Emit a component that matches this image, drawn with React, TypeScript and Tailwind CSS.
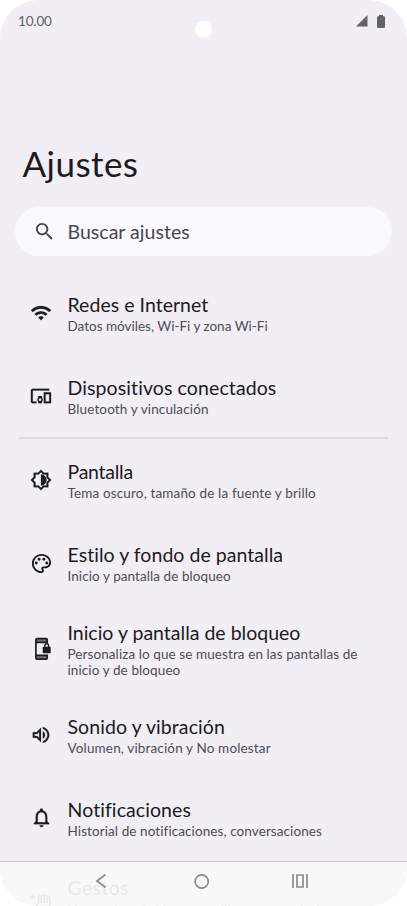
import type { ReactNode } from 'react';
import {
  MdDevicesOther,
  MdNotificationsNone,
  MdOutlineBrightnessMedium,
  MdOutlinePalette,
  MdOutlineVolumeUp,
  MdSearch,
  MdWifi,
} from 'react-icons/md';

const bold = '[&>path:last-child]:[stroke-width:0.2px]';

function PhoneLockIcon() {
  return (
    <svg width="22" height="24" viewBox="0 0 22 24" fill="none">
      <path d="M17.2 6.2V2.8c0-.7-.4-1.100-1.100-1.100H7c-.7 0-1.100.4-1.100 1.100v18.200c0 .7.4 1.100 1.100 1.100h9.100c.7 0 1.100-.4 1.100-1.100v-3.400M6 5.300h11.200M6 18.300h11.200" stroke="currentColor" strokeWidth="1.700" />
      <path d="M6 2h11v3H6zM6 19h11v3H6z" fill="currentColor" opacity=".6" />
      <rect x="12.700" y="9.800" width="8" height="6.400" rx=".8" fill="currentColor" />
      <path d="M14.800 10V8.700a1.900 1.900 0 0 1 3.800 0V10" stroke="currentColor" strokeWidth="1.400" />
    </svg>
  );
}

function GestureIcon() {
  return (
    <svg width="24" height="24" viewBox="0 0 24 24" fill="none" stroke="currentColor">
      <path d="m4 2 .9 2.100L7 5l-2.100.9L4 8l-.9-2.100L1 5l2.100-.9z" fill="currentColor" stroke="none" />
      <path strokeWidth="1.500" d="M9.500 12V5.500q0-1.500 1.400-1.500t1.400 1.500V11m0-6q0-2 1.500-2t1.500 2v6m0-6q0-1.800 1.500-1.800T18.300 5v6m0-5q0-1.300 1.200-1.300T20.700 6v10q0 6-5.700 6-4 0-6-5l-1-4" />
    </svg>
  );
}

type Item = {
  icon: ReactNode;
  title: string;
  titleClass: string;
  lines: { text: string; className: string }[];
  rowClass?: string;
};

const items: Item[] = [
  {
    icon: <MdWifi size={22} className={bold} />,
    title: 'Redes e Internet',
    titleClass: 'tracking-[0.03px]',
    lines: [{ text: 'Datos móviles, Wi-Fi y zona Wi-Fi', className: 'tracking-[0px]' }],
  },
  {
    icon: <MdDevicesOther size={22} className={bold} />,
    title: 'Dispositivos conectados',
    titleClass: 'tracking-[0.1px]',
    lines: [{ text: 'Bluetooth y vinculación', className: 'tracking-[0.13px]' }],
  },
  {
    icon: <MdOutlineBrightnessMedium size={22} className={bold} />,
    title: 'Pantalla',
    titleClass: 'tracking-[-0.25px]',
    lines: [{ text: 'Tema oscuro, tamaño de la fuente y brillo', className: 'tracking-[0.15px]' }],
    rowClass: 'h-[84px]',
  },
  {
    icon: <MdOutlinePalette size={23} />,
    title: 'Estilo y fondo de pantalla',
    titleClass: 'tracking-[0.04px]',
    lines: [{ text: 'Inicio y pantalla de bloqueo', className: 'tracking-[0.07px]' }],
    rowClass: 'h-[82px]',
  },
  {
    icon: <PhoneLockIcon />,
    title: 'Inicio y pantalla de bloqueo',
    titleClass: 'tracking-[0px]',
    lines: [
      { text: 'Personaliza lo que se muestra en las pantallas de', className: 'tracking-[0.09px]' },
      { text: 'inicio y de bloqueo', className: 'tracking-[0.1px]' },
    ],
    rowClass: 'h-[89px]',
  },
  {
    icon: <MdOutlineVolumeUp size={22} className={bold} />,
    title: 'Sonido y vibración',
    titleClass: 'tracking-[0.08px]',
    lines: [{ text: 'Volumen, vibración y No molestar', className: 'tracking-[0.15px]' }],
  },
  {
    icon: <MdNotificationsNone size={23} className={bold} />,
    title: 'Notificaciones',
    titleClass: 'tracking-[0.08px]',
    lines: [{ text: 'Historial de notificaciones, conversaciones', className: 'tracking-[0.09px]' }],
  },
  {
    icon: <GestureIcon />,
    title: 'Gestos',
    titleClass: 'tracking-[0.35px]',
    lines: [
      { text: 'Usa gestos rápidos y sencillos para controlar', className: 'tracking-[0.1px]' },
      { text: '', className: '' },
    ],
    rowClass: 'h-[89px]',
  },
];

function Row({ item }: { item: Item }) {
  return (
    <li className={`flex shrink-0 items-center ${item.rowClass ?? 'h-[83px]'}`}>
      <span className="ml-[29px] flex w-6 shrink-0 justify-center text-[#1c1b20]">{item.icon}</span>
      <div className="ml-[14.500px] whitespace-nowrap">
        <div className="text-[19.500px] leading-[26px] text-[#1c1b20]">
          <span className={item.titleClass}>{item.title}</span>
        </div>
        {item.lines.map((line) => (
          <div key={line.text} className="h-4 text-[13.500px] leading-4 text-[#4e4c54]">
            <span className={line.className}>{line.text}</span>
          </div>
        ))}
      </div>
    </li>
  );
}

export default function App() {
  return (
    <div className="h-[906px] w-[407px] bg-white">
      <main className="relative flex h-full flex-col overflow-hidden rounded-[38px] bg-[#f1eef6] font-['Lato',sans-serif] [font-variant-ligatures:none]">
        <header className="flex h-[42px] shrink-0 items-center justify-between pr-[22px] pl-[18px] text-[#626165]">
          <span className="text-[13.500px] leading-4 tracking-[-0.15px]">10.00</span>
          <div className="flex items-center gap-[9px]">
            <svg width="12" height="12" viewBox="0 0 12 12">
              <path d="M11.500 0v11.500H0z" fill="currentColor" />
            </svg>
            <svg width="8" height="13" viewBox="0 0 8 13">
              <path d="M2 0h4v1.300h1q1 0 1 1V12q0 1-1 1H1q-1 0-1-1V2.300q0-1 1-1h1z" fill="currentColor" />
            </svg>
          </div>
        </header>
        <span className="absolute top-[21px] left-[195px] size-[17px] rounded-full bg-white" />

        <h1 className="mt-[100px] ml-[22.500px] text-[35px] leading-[42px] tracking-[0.45px] whitespace-nowrap text-[#1c1b20]">
          <span>Ajustes</span>
        </h1>

        <div className="mx-[15px] mt-[23px] flex h-[49px] shrink-0 items-center rounded-full bg-[#faf8ff] pl-[18px] text-[#47464c]">
          <MdSearch size={23} />
          <span className="mt-px ml-[11.500px] text-[19.500px] leading-6 tracking-[0.03px] whitespace-nowrap">Buscar ajustes</span>
        </div>

        <ul className="mt-[15px] flex flex-col">
          {items.slice(0, 2).map((item) => (
            <Row key={item.title} item={item} />
          ))}
          <li className="mx-[19px] -mb-px h-[2px] shrink-0 bg-[#dcd9e1]" />
          {items.slice(2).map((item) => (
            <Row key={item.title} item={item} />
          ))}
        </ul>

        <nav className="absolute inset-x-0 bottom-0 h-[45px] border-t border-[#cbc7d0] bg-[#f9f9f9]/93">
          <div className="flex h-[38px] items-center pl-[95px] text-[#8b8b8b]">
            <svg width="12" height="16" viewBox="0 0 12 16" fill="none" stroke="currentColor" strokeWidth="1.700">
              <path d="M10.500 1.500 2 8l8.500 6.500" />
            </svg>
            <svg className="ml-[87px]" width="16" height="16" viewBox="0 0 16 16" fill="none" stroke="currentColor" strokeWidth="1.700">
              <circle cx="7.700" cy="8.500" r="6.600" />
            </svg>
            <svg className="ml-[82px]" width="16" height="14" viewBox="0 0 16 14" fill="none" stroke="currentColor" strokeWidth="1.700">
              <path d="M1 0v14M15 0v14M5 1h6v12H5z" />
            </svg>
          </div>
        </nav>
      </main>
    </div>
  );
}
